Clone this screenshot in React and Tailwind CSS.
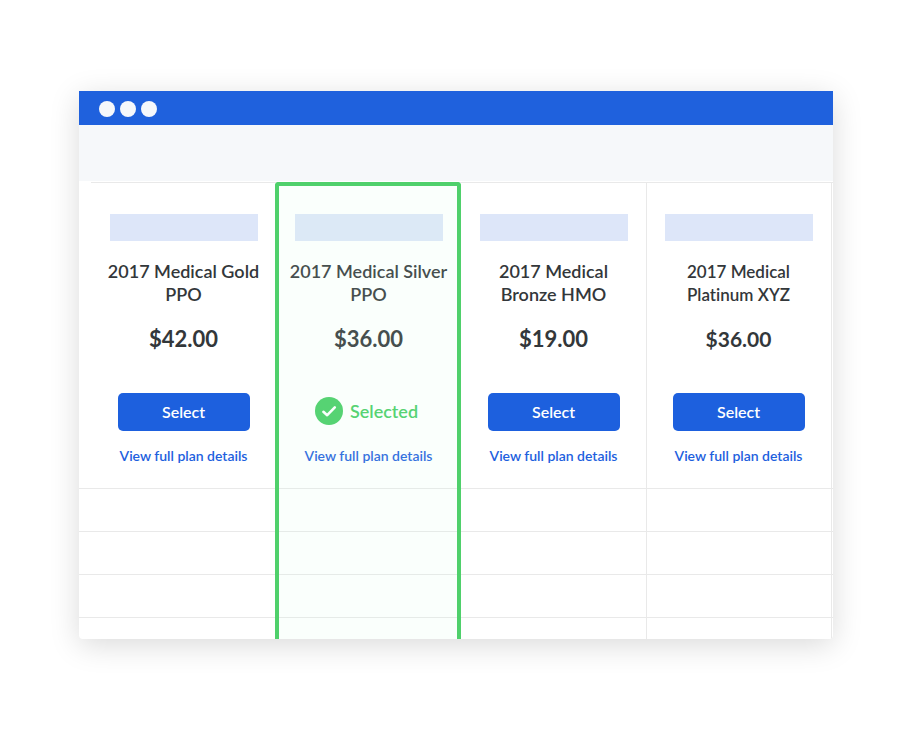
const plans = [
  { id: "gold", title: ["2017 Medical Gold", "PPO"], price: "$42.00" },
  { id: "silver", title: ["2017 Medical Silver", "PPO"], price: "$36.00", selected: true },
  { id: "bronze", title: ["2017 Medical", "Bronze HMO"], price: "$19.00" },
  { id: "platinum", title: ["2017 Medical", "Platinum XYZ"], price: "$36.00", compact: true },
];

function SelectedMark() {
  return (
    <p className="flex h-[38px] items-center gap-[7px] pr-1 pb-0.5 text-[18px] font-semibold text-[#45cd63]">
      <svg viewBox="0 0 28 28" className="size-7" aria-hidden="true">
        <circle cx="14" cy="14" r="14" fill="#45cd63" />
        <path
          d="M8.4 14.8 12.2 18.2 19.8 10.4"
          fill="none"
          stroke="#fff"
          strokeWidth="2.6"
          strokeLinecap="round"
          strokeLinejoin="round"
        />
      </svg>
      Selected
    </p>
  );
}

function Plan({ plan }) {
  const titleSize = plan.compact ? "text-[17px]" : "text-[18px]";
  const priceSize = plan.compact ? "text-[21px]" : "text-[22px]";
  return (
    <article className="flex flex-col items-center pt-[31px] pb-[22px] text-center">
      <div className="h-[27px] w-4/5 bg-[#dde6f9]" />
      <h2
        className={`mt-[19px] leading-[23px] font-semibold whitespace-nowrap text-[#33373a] ${titleSize}`}
      >
        {plan.title[0]}
        <br />
        {plan.title[1]}
      </h2>
      <p className={`mt-[19px] mb-10 leading-7 font-bold text-[#33373a] ${priceSize}`}>
        {plan.price}
      </p>
      {plan.selected ? (
        <SelectedMark />
      ) : (
        <button
          type="button"
          className="h-[38px] w-[132px] rounded-[5px] bg-[#1d60de] text-[16px] font-semibold text-white"
        >
          Select
        </button>
      )}
      <a href="#details" className="mt-[15px] text-[14px] leading-5 font-semibold text-[#1d60de]">
        View full plan details
      </a>
    </article>
  );
}

export default function App() {
  return (
    <main className="min-h-screen bg-white px-[79px] pt-[91px] pb-[91px] font-['Lato','Liberation_Sans',sans-serif] [font-variant-ligatures:none]">
      <section className="overflow-hidden rounded-b-sm bg-white shadow-[0_6px_30px_rgba(0,0,0,0.15)]">
        <header className="flex h-[34px] items-center gap-[5px] bg-[#1f61dd] pt-0.5 pl-5">
          <span className="size-4 rounded-full bg-[#f6f8fb]" />
          <span className="size-4 rounded-full bg-[#f6f8fb]" />
          <span className="size-4 rounded-full bg-[#f6f8fb]" />
        </header>
        <div className="h-14 bg-[#f6f8fa]" />

        <div className="mt-px grid">
          <div className="col-start-1 row-start-1">
            <div className="ml-3 border-t border-[#e9e9e9]" />
            <div className="grid grid-cols-4 pr-[2px] pl-3">
              {plans.map((plan) => (
                <Plan key={plan.id} plan={plan} />
              ))}
            </div>
            <div className="h-[43px] border-t border-[#e9e9e9]" />
            <div className="h-[43px] border-t border-[#e9e9e9]" />
            <div className="h-[43px] border-t border-[#e9e9e9]" />
            <div className="h-[22px] border-t border-[#e9e9e9]" />
          </div>

          {/* Column rules and the highlight of the chosen plan */}
          <div className="pointer-events-none col-start-1 row-start-1 grid grid-cols-4 pr-[2px] pl-3">
            <div />
            <div className="-ml-px rounded-t-sm border-4 border-b-0 border-[#4fd06b] bg-[#d2ffe4]/12" />
            <div />
            <div className="-mr-px border-x border-[#e9e9e9]" />
          </div>
        </div>
      </section>
    </main>
  );
}
